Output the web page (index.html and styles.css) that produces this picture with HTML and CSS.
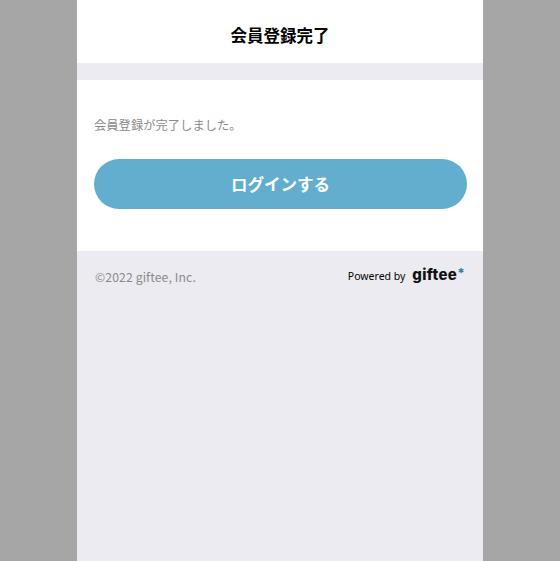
FILE: index.html
```html
<!DOCTYPE html>
<html lang="ja">
<head>
<meta charset="utf-8">
<title>会員登録完了</title>
<link rel="stylesheet" href="styles.css">
</head>
<body>
<div class="page">
  <header class="header"><h1 class="title">会員登録完了</h1></header>
  <main class="main">
    <p class="message">会員登録が完了しました。</p>
    <a class="button" href="#">ログインする</a>
  </main>
  <footer class="footer">
    <small class="copy">©2022 giftee, Inc.</small>
    <div class="powered">
      <span class="powered-label">Powered by</span>
      <span class="logo">giftee<span class="logo-star">*</span></span>
    </div>
  </footer>
</div>
</body>
</html>
```
FILE: styles.css
```css
* { box-sizing: border-box; }
html, body { margin: 0; height: 100%; }
body {
  background: #a6a6a6;
  font-family: "Noto Sans CJK JP", "Noto Sans", sans-serif;
}
.page {
  width: 406px;
  height: 561px;
  margin: 0 auto;
  background: #ecebf1;
  display: flex;
  flex-direction: column;
}
.header {
  height: 63px;
  background: #fff;
  display: flex;
  align-items: center;
  justify-content: center;
  padding-top: 7px;
}
.title {
  margin: 0;
  font-size: 16.5px;
  font-weight: 700;
  color: #000;
  line-height: 1;
}
.main {
  margin-top: 17px;
  height: 171px;
  background: #fff;
  padding: 36px 16px 0 17px;
}
.message {
  margin: 0 0 25px;
  font-size: 12.3px;
  line-height: 18px;
  color: #8a8a8a;
}
.button {
  display: flex;
  align-items: center;
  justify-content: center;
  height: 50px;
  border-radius: 25px;
  background: #62aecf;
  color: #fff;
  font-size: 16.5px;
  font-weight: 700;
  text-decoration: none;
}
.footer {
  display: flex;
  justify-content: space-between;
  align-items: flex-start;
  padding: 16px 18px 0 18px;
}
.copy {
  font-size: 12.2px;
  letter-spacing: 0.12px;
  line-height: 20px;
  color: #8a8a8a;
  font-family: "Noto Sans CJK JP", sans-serif;
}
.powered {
  display: flex;
  align-items: baseline;
  gap: 7px;
  margin-top: -2px;
}
.powered-label {
  font-size: 10.5px;
  color: #000;
  font-family: "Noto Sans", sans-serif;
}
.logo {
  font-family: "Inter", sans-serif;
  font-size: 15px;
  font-weight: 800;
  letter-spacing: 0.3px;
  color: #111;
}
.logo-star {
  color: #2f7fa8;
  font-size: 13px;
  font-weight: 800;
  vertical-align: 2px;
  line-height: 0;
}
```
